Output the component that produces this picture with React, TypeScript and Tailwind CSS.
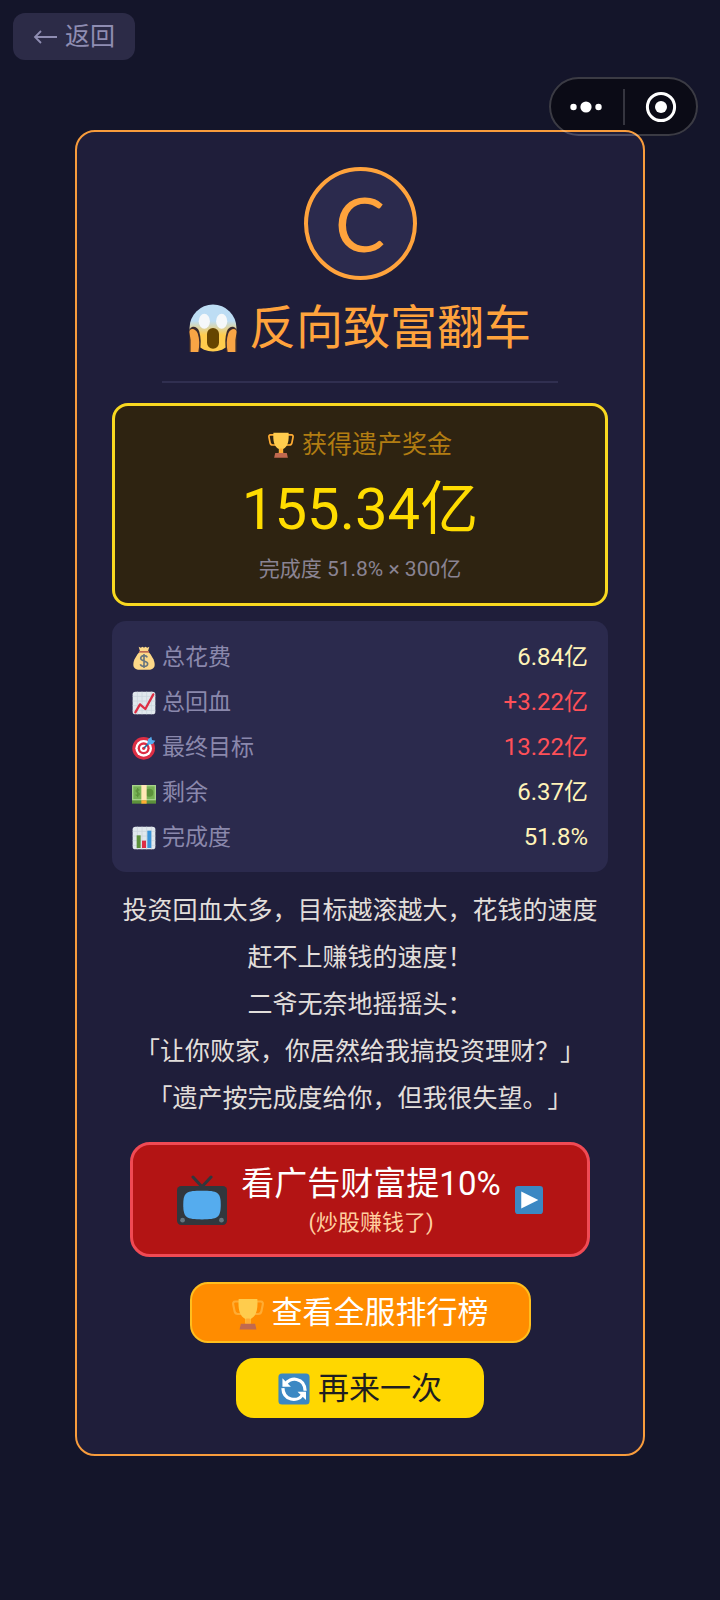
import type { ReactNode } from 'react';

const stats = [
  { icon: <MoneyBag />, label: '总花费', value: '6.84亿', color: 'text-[#fff3b8]' },
  { icon: <ChartUp />, label: '总回血', value: '+3.22亿', color: 'text-[#ff5058]' },
  { icon: <Target />, label: '最终目标', value: '13.22亿', color: 'text-[#ff5058]' },
  { icon: <Banknote />, label: '剩余', value: '6.37亿', color: 'text-[#fff3b8]' },
  { icon: <BarChart />, label: '完成度', value: '51.8%', color: 'text-[#fff3b8]' },
];

export default function App() {
  return (
    <div className="relative min-h-screen bg-[#14152a] pb-10 font-[Roboto,'Noto_Sans_CJK_SC',sans-serif] [text-spacing-trim:space-all]">
      <header className="flex h-[130px] items-start p-[13px]">
        <button className="flex h-[47px] items-center gap-2 rounded-xl bg-[#2c2b47] px-5 text-[25px] text-[#8f8db2]">
          <svg viewBox="0 0 24 24" className="size-6" fill="none" stroke="currentColor" strokeWidth="1.8">
            <path d="M24 12H2M8 6l-6 6 6 6" />
          </svg>
          返回
        </button>
      </header>

      <div className="absolute top-[77px] right-[22px] flex h-[59px] w-[149px] items-center rounded-full bg-[#0b0b16]">
        <button aria-label="更多" className="flex h-9 flex-1 items-center justify-center">
          <svg viewBox="0 0 32 12" className="h-3 w-8" fill="#fff">
            <circle cx="3.5" cy="6" r="3.2" />
            <circle cx="16" cy="6" r="5.6" />
            <circle cx="28.5" cy="6" r="3.2" />
          </svg>
        </button>
        <span className="h-9 w-0.5 bg-[#35353f]" />
        <button aria-label="关闭" className="flex h-9 flex-1 items-center justify-center">
          <svg viewBox="0 0 32 32" className="size-8">
            <circle cx="16" cy="16" r="13.6" fill="none" stroke="#fff" strokeWidth="3" />
            <circle cx="16" cy="16" r="6" fill="#fff" />
          </svg>
        </button>
      </div>

      <main className="relative mx-[75px] flex flex-col rounded-[20px] border-2 border-[#f89c3c] bg-[#1f1e3a] px-[35px] pt-[35px] pb-9">
        <div className="mx-auto flex size-[113px] items-center justify-center rounded-full border-4 border-[#ffa33c] bg-[#2b2a4d] font-[Lato,sans-serif] text-[75px] leading-none text-[#ffa33c]">
          C
        </div>

        <h1 className="mt-[18px] flex items-center justify-center gap-3 text-[47px] leading-[60px] font-normal text-[#ffa33c]">
          <Scream />
          反向致富翻车
        </h1>

        <hr className="mx-auto mt-[23px] w-4/5 border-t-2 border-[#302f50]" />

        <section className="mt-5 rounded-2xl border-[3px] border-[#f8d820] bg-[#2e2311] pt-[23px] pb-5 text-center">
          <p className="flex items-center justify-center gap-2 text-[25px] leading-8 text-[#b27d12]">
            <Trophy className="size-[26px]" />
            获得遗产奖金
          </p>
          <p className="mt-4 text-[58px] leading-[64px] text-[#ffdc00]">155.34亿</p>
          <p className="mt-[14px] text-[21px] leading-7 text-[#8a8393]">完成度 51.8% × 300亿</p>
        </section>

        <dl className="mt-[15px] rounded-[14px] bg-[#2b2a4d] px-5 pt-[14px] pb-3">
          {stats.map((s) => (
            <StatRow key={s.label} {...s} />
          ))}
        </dl>

        <div className="mt-[15px] text-center text-[25px] leading-[47px] text-[#e2dedb]">
          <p>投资回血太多，目标越滚越大，花钱的速度赶不上赚钱的速度！</p>
          <p>二爷无奈地摇摇头：</p>
          <p>「让你败家，你居然给我搞投资理财？」</p>
          <p>「遗产按完成度给你，但我很失望。」</p>
        </div>

        <button className="mx-[18px] mt-5 flex h-[115px] items-center justify-center gap-[14px] rounded-[20px] border-[3px] border-[#f04a54] bg-[#b31414]">
          <Television />
          <span className="flex flex-col items-center pt-1">
            <span className="text-[33px] leading-[42px] text-white">看广告财富提10%</span>
            <span className="text-[22px] leading-9 text-[#ffcfa0]">(炒股赚钱了)</span>
          </span>
          <svg viewBox="0 0 36 36" className="size-7">
            <rect width="36" height="36" rx="4" fill="#3b88c3" />
            <path d="M8 7l22 11L8 29z" fill="#fff" />
          </svg>
        </button>

        <button className="mx-auto mt-[25px] flex h-[61px] items-center gap-2 rounded-[18px] border-2 border-[#ffbe1e] bg-[#ff8c00] px-10 pt-0.5 text-[31px] text-white">
          <Trophy className="size-8" />
          查看全服排行榜
        </button>

        <button className="mx-auto mt-[15px] flex h-[60px] items-center gap-2 rounded-[18px] bg-[#ffd700] px-[42px] pt-0.5 text-[31px] text-[#1f1e20]">
          <Refresh />
          再来一次
        </button>
      </main>

      <div className="pointer-events-none absolute top-[77px] right-[22px] h-[59px] w-[149px] rounded-full border-2 border-white/20" />
    </div>
  );
}

function StatRow({ icon, label, value, color }: { icon: ReactNode; label: string; value: string; color: string }) {
  return (
    <div className="flex items-center justify-between leading-[45px]">
      <dt className="flex items-center gap-[6px] text-[23px] text-[#8a88ac]">
        {icon}
        {label}
      </dt>
      <dd className={`text-[24px] ${color}`}>{value}</dd>
    </div>
  );
}

function Scream() {
  return (
    <svg viewBox="0 0 36 36" className="size-12">
      <defs>
        <linearGradient id="scream" x1="0" y1="0" x2="0" y2="1">
          <stop offset="0.35" stopColor="#bdddf4" />
          <stop offset="0.65" stopColor="#ffcc4d" />
        </linearGradient>
      </defs>
      <circle cx="18" cy="18" r="17.6" fill="url(#scream)" />
      <ellipse cx="11.5" cy="13" rx="4.2" ry="5.6" fill="#f5f8fa" />
      <ellipse cx="24.5" cy="13" rx="4.2" ry="5.6" fill="#f5f8fa" />
      <rect x="13.5" y="18" width="9" height="15.500" rx="4.500" fill="#664500" />
      <path d="M0 36V22c0-6.500 6-6 7.600-1.500C9 25 9.200 30 8 36z" fill="#3a2a2c" />
      <path d="M36 36V22c0-6.500-6-6-7.600-1.500C27 25 26.800 30 28 36z" fill="#3a2a2c" />
      <path d="M1.200 36V27L.3 21c0-3.500 4.900-3 6.200 1C8 26.500 8 31 7 36z" fill="#f9a545" />
      <path d="M34.800 36V27l.9-6c0-3.500-4.900-3-6.200 1-1.500 4.500-1.500 9-.5 14z" fill="#f9a545" />
    </svg>
  );
}

function Trophy({ className }: { className: string }) {
  return (
    <svg viewBox="0 0 36 36" className={className}>
      <path d="M9 4H3.500C1.500 4 1 5.500 1.400 7.500l1.500 7.500c.4 2 1.800 3 3.600 3H12M27 4h5.500c2 0 2.500 1.500 2.100 3.500L33.100 15c-.4 2-1.800 3-3.600 3H24" fill="none" stroke="#ffac33" strokeWidth="2.400" />
      <path d="M7.500 1h21c.8 10-.5 19.500-7.500 22.500V29h-6v-5.500C8 20.500 6.700 11 7.500 1z" fill="#ffcc4d" />
      <path d="M16 23h4l1 6h-6z" fill="#ffac33" />
      <path d="M10 29h16l1.500 6.500h-19z" fill="#c1694f" />
    </svg>
  );
}

function MoneyBag() {
  return (
    <svg viewBox="0 0 36 36" className="size-6">
      <path d="M12 8h12c5 6 10 13 10 20 0 5-4 7.500-9 7.500H11C6 35.500 2 33 2 28 2 21 7 14 12 8z" fill="#fdd888" />
      <path d="M10 1l3 1.500L16 1l2 1.500L20 1l3 1.500L26 1l-2 7H12z" fill="#fdd888" />
      <path d="M10.500 7.500h15v2.500h-15z" fill="#bf6952" />
      <path d="M23 17c-1-2-3-2.500-5-2.500-3 0-5 1.500-5 4s2 3.200 5 4 5.500 1.500 5.500 4-2.500 4-5.500 4c-2.500 0-4.700-1-5.500-3.200M18 12v21" fill="none" stroke="#67757f" strokeWidth="2.400" />
    </svg>
  );
}

function ChartUp() {
  return (
    <svg viewBox="0 0 36 36" className="size-6">
      <rect x="1" y="1" width="34" height="34" rx="4" fill="#e1e8ed" />
      <path d="M1 8h34M1 15h34M1 22h34M1 29h34M8 1v34M15 1v34M22 1v34M29 1v34" stroke="#ccd6dd" strokeWidth="1.200" />
      <path d="M5 32l7-12 8 7L32 5" fill="none" stroke="#dd2e44" strokeWidth="3.400" strokeLinecap="round" strokeLinejoin="round" />
    </svg>
  );
}

function Target() {
  return (
    <svg viewBox="0 0 36 36" className="size-6">
      <circle cx="17.500" cy="18.500" r="17" fill="#dd2e44" />
      <circle cx="17.500" cy="18.500" r="12.500" fill="#fff" />
      <circle cx="17.500" cy="18.500" r="9" fill="#dd2e44" />
      <circle cx="17.500" cy="18.500" r="5.500" fill="#fff" />
      <circle cx="17.500" cy="18.500" r="2.500" fill="#dd2e44" />
      <path d="M18 18L28 8" stroke="#226699" strokeWidth="2.600" />
      <path d="M23 12l1-7 5-4 1 5 5 1-4 5-7 1z" fill="#55acee" />
    </svg>
  );
}

function Banknote() {
  return (
    <svg viewBox="0 0 36 36" className="size-6">
      <path d="M0 6h36v28H0z" fill="#5c913b" />
      <path d="M0 6h36v23H0z" fill="#a7d28b" />
      <path d="M2 8h32v19H2z" fill="#77b255" />
      <circle cx="26" cy="17.500" r="6" fill="#5c913b" />
      <path d="M11 14c-1-1.500-5-1.500-5 1s5 2 5 4.500-4 3-5.500 1M8.500 10.500v14" fill="none" stroke="#5c913b" strokeWidth="1.600" />
      <path d="M14 6h8v23h-8z" fill="#ffe8b6" />
      <path d="M14 29h8v5h-8z" fill="#ffac33" />
    </svg>
  );
}

function BarChart() {
  return (
    <svg viewBox="0 0 36 36" className="size-6">
      <rect x="1" y="1" width="34" height="34" rx="4" fill="#e1e8ed" />
      <path d="M1 8h34M1 15h34M1 22h34M1 29h34M8 1v34M15 1v34M22 1v34M29 1v34" stroke="#ccd6dd" strokeWidth="1.200" />
      <path d="M7 14h6v19H7z" fill="#5c913b" />
      <path d="M15 22h6v11h-6z" fill="#dd2e44" />
      <path d="M23 7h6v26h-6z" fill="#3b94d9" />
    </svg>
  );
}

function Television() {
  return (
    <svg viewBox="0 0 36 36" className="size-[50px]">
      <path d="M11.500 1.500L18 8.500l6.500-7" fill="none" stroke="#31373d" strokeWidth="2.200" strokeLinecap="round" />
      <rect y="8" width="36" height="28" rx="3" fill="#31373d" />
      <path d="M18 11.300c11 0 13.500.7 13.500 10.200S29 32 18 32 4.500 31 4.500 21.500 7 11.300 18 11.300z" fill="#55acee" />
      <circle cx="4" cy="32.500" r="1.700" fill="#66757f" />
      <circle cx="32" cy="32.500" r="1.700" fill="#66757f" />
    </svg>
  );
}

function Refresh() {
  return (
    <svg viewBox="0 0 36 36" className="size-8">
      <rect x="0.500" y="0.500" width="35" height="35" rx="4" fill="#3b88c3" />
      <path d="M8.500 12.500C13 4 30 4.500 30.500 20M27.500 24.500C22 33 6 31 5.500 17" fill="none" stroke="#fff" strokeWidth="3.600" />
      <path d="M5 6v9.500h9.500zM31.500 30.500V21H22z" fill="#fff" />
    </svg>
  );
}
